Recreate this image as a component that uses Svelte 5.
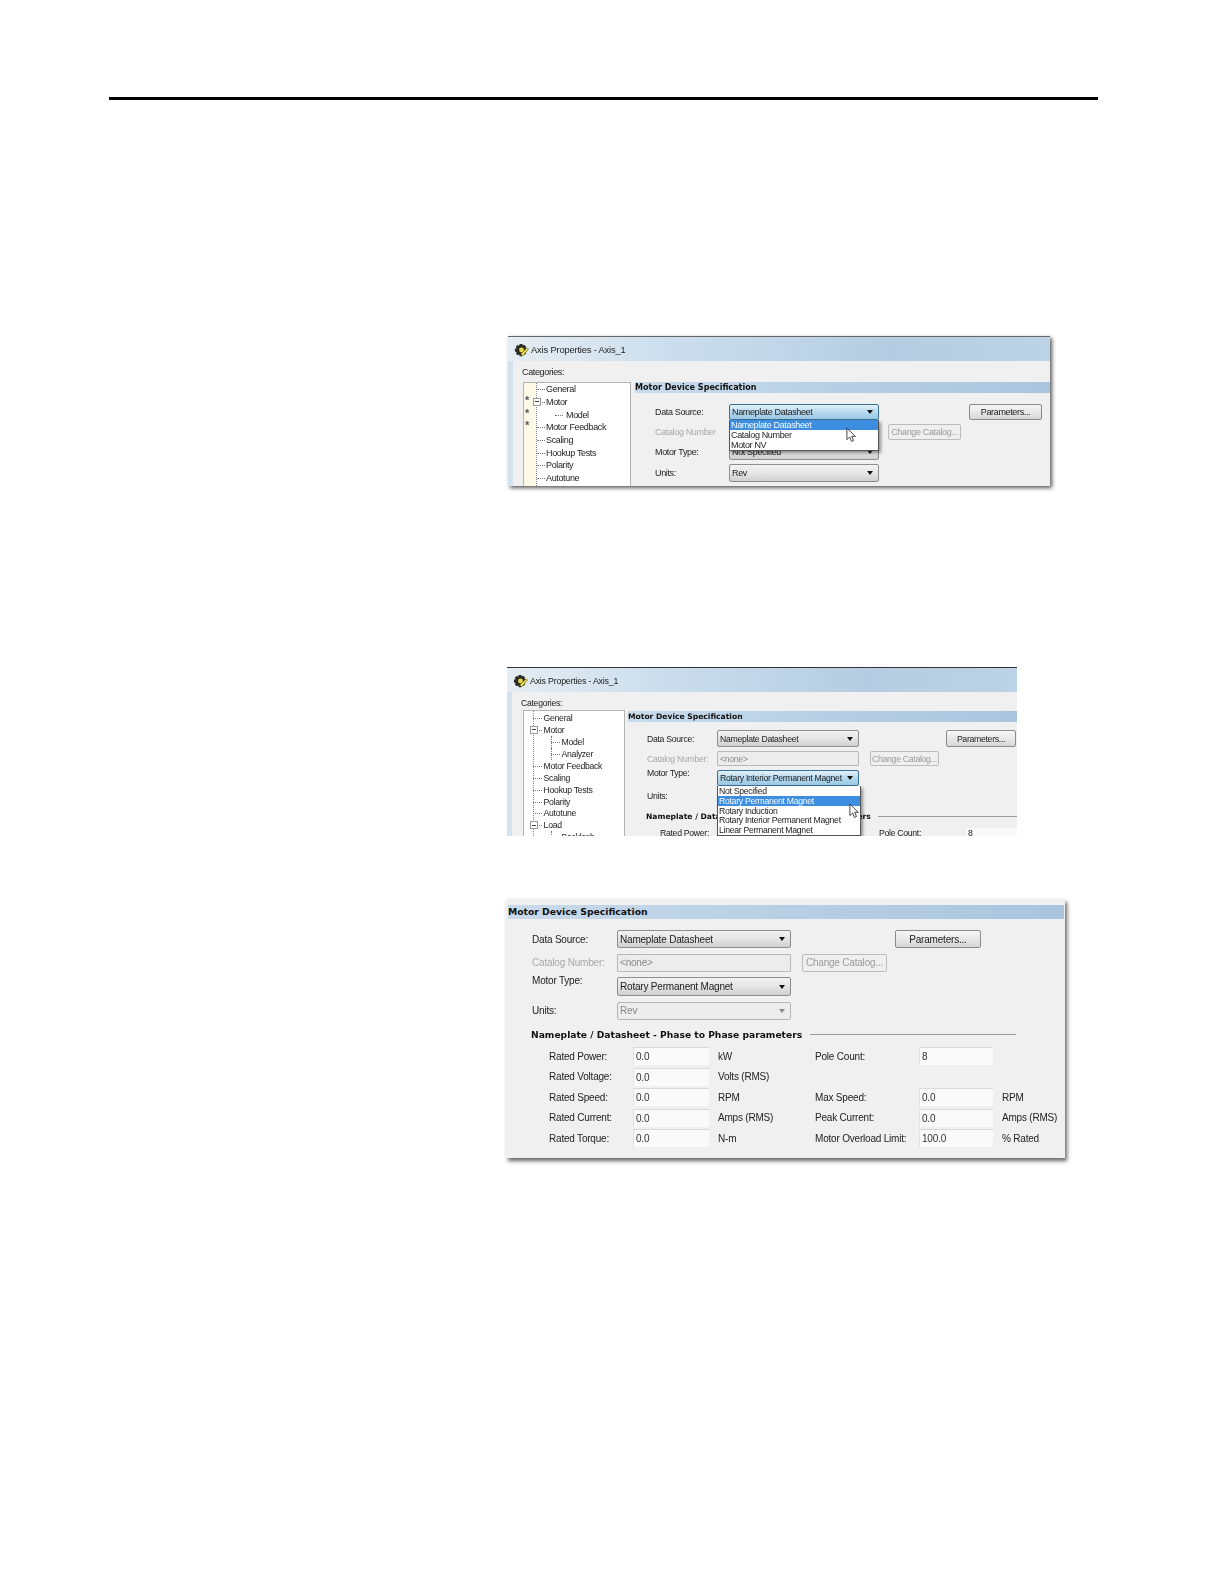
<script>
  const tree1 = [
    { t: 'General', d: 0 }, { t: 'Motor', d: 0, box: true }, { t: 'Model', d: 1 },
    { t: 'Motor Feedback', d: 0 }, { t: 'Scaling', d: 0 }, { t: 'Hookup Tests', d: 0 },
    { t: 'Polarity', d: 0 }, { t: 'Autotune', d: 0 }
  ];
  const tree2 = [
    { t: 'General', d: 0 }, { t: 'Motor', d: 0, box: true }, { t: 'Model', d: 1 }, { t: 'Analyzer', d: 1 },
    { t: 'Motor Feedback', d: 0 }, { t: 'Scaling', d: 0 }, { t: 'Hookup Tests', d: 0 },
    { t: 'Polarity', d: 0 }, { t: 'Autotune', d: 0 }, { t: 'Load', d: 0, box: true }, { t: 'Backlash', d: 1 }
  ];
  const params = [
    ['Rated Power:', '0.0', 'kW', 'Pole Count:', '8', ''],
    ['Rated Voltage:', '0.0', 'Volts (RMS)', '', '', ''],
    ['Rated Speed:', '0.0', 'RPM', 'Max Speed:', '0.0', 'RPM'],
    ['Rated Current:', '0.0', 'Amps (RMS)', 'Peak Current:', '0.0', 'Amps (RMS)'],
    ['Rated Torque:', '0.0', 'N-m', 'Motor Overload Limit:', '100.0', '% Rated']
  ];
</script>

{#snippet gear()}
  <svg class="gear" viewBox="0 0 16 16" width="15" height="15">
    <path d="M6 1h3l.4 1.7 1.6-.8 2 2-.9 1.5 1.8.5v3l-1.8.4.9 1.6-2 2-1.6-.9L9 14H6l-.4-1.8-1.6.9-2-2 .9-1.6L1 9V6l1.8-.5-.9-1.5 2-2 1.6.8z" fill="#2a2a22"/>
    <circle cx="8" cy="7.5" r="2.6" fill="#e8d94a"/>
    <path d="M7 12l7-7 1.5 1.5-6 7z" fill="#f2e24e" stroke="#55501c" stroke-width=".6"/>
  </svg>
{/snippet}

{#snippet cursor()}
  <svg class="cursor" viewBox="0 0 12 18" width="11" height="17">
    <path d="M1 1v12.5l3-2.8 2 4.8 2.2-1-2-4.6h4z" fill="#fff" stroke="#222" stroke-width=".9" stroke-linejoin="round"/>
  </svg>
{/snippet}

{#snippet tree(items)}
  {#each items as it}
    <div class="node" class:deep={it.d === 1}>
      {#if it.box}<span class="pm"></span>{/if}
      <span class="tick"></span><span>{it.t}</span>
    </div>
  {/each}
{/snippet}

{#snippet combo(text, extra = '')}
  <div class="combo {extra}"><span>{text}</span><i></i></div>
{/snippet}

<div class="page">
  <div class="rule"></div>

  <section class="shot s1">
    <header class="title">{@render gear()}<span>Axis Properties - Axis_1</span></header>
    <div class="body">
      <aside class="side">
        <div class="cat">Categories:</div>
        <div class="tree">
          <span class="star a">*</span><span class="star b">*</span><span class="star c">*</span>
          {@render tree(tree1)}
        </div>
      </aside>
      <div class="main">
        <div class="band">Motor Device Specification</div>
        <div class="form">
          <span class="lab">Data Source:</span>
          {@render combo('Nameplate Datasheet', 'focus')}
          <span></span><span></span><span></span>
          <button class="btn">Parameters...</button>

          <span class="lab off">Catalog Number</span>
          <span></span><span></span>
          <button class="btn off">Change Catalog...</button>
          <span></span><span></span>

          <span class="lab">Motor Type:</span>
          {@render combo('Not Specified')}
          <span></span><span></span><span></span><span></span>

          <span class="lab">Units:</span>
          {@render combo('Rev')}
          <span></span><span></span><span></span><span></span>
        </div>
        <div class="menu">
          <div class="item hi">Nameplate Datasheet</div>
          <div class="item">Catalog Number</div>
          <div class="item">Motor NV</div>
          {@render cursor()}
        </div>
      </div>
    </div>
  </section>

  <section class="shot s2">
    <header class="title">{@render gear()}<span>Axis Properties - Axis_1</span></header>
    <div class="body">
      <aside class="side">
        <div class="cat">Categories:</div>
        <div class="tree">{@render tree(tree2)}</div>
      </aside>
      <div class="main">
        <div class="band">Motor Device Specification</div>
        <div class="form">
          <span class="lab">Data Source:</span>
          {@render combo('Nameplate Datasheet')}
          <span></span><span></span><span></span>
          <button class="btn">Parameters...</button>

          <span class="lab off">Catalog Number:</span>
          <div class="field">&lt;none&gt;</div>
          <span></span>
          <button class="btn off">Change Catalog...</button>
          <span></span><span></span>

          <span class="lab up">Motor Type:</span>
          {@render combo('Rotary Interior Permanent Magnet', 'focus')}
          <span></span><span></span><span></span><span></span>

          <span class="lab">Units:</span>
          <span></span><span></span><span></span><span></span><span></span>
        </div>
        <div class="head"><b>Nameplate / Datasheet - Phase to Phase parameters</b><em></em></div>
        <div class="peek">
          <span>Rated Power:</span>
          <span>Pole Count:</span>
          <span class="p3">8</span>
        </div>
        <div class="menu">
          <div class="item">Not Specified</div>
          <div class="item hi">Rotary Permanent Magnet</div>
          <div class="item">Rotary Induction</div>
          <div class="item">Rotary Interior Permanent Magnet</div>
          <div class="item">Linear Permanent Magnet</div>
          {@render cursor()}
        </div>
      </div>
    </div>
  </section>

  <section class="shot s3">
    <div class="band">Motor Device Specification</div>
    <div class="form">
      <span class="lab">Data Source:</span>
      {@render combo('Nameplate Datasheet')}
      <span></span><span></span><span></span>
      <button class="btn">Parameters...</button>

      <span class="lab off">Catalog Number:</span>
      <div class="field">&lt;none&gt;</div>
      <span></span>
      <button class="btn off">Change Catalog...</button>
      <span></span><span></span>

      <span class="lab up">Motor Type:</span>
      {@render combo('Rotary Permanent Magnet')}
      <span></span><span></span><span></span><span></span>

      <span class="lab">Units:</span>
      {@render combo('Rev', 'dis')}
      <span></span><span></span><span></span><span></span>
    </div>
    <div class="head"><b>Nameplate / Datasheet - Phase to Phase parameters</b><em></em></div>
    <div class="grid">
      {#each params as row}
        <span>{row[0]}</span>
        <div class="inp">{row[1]}</div>
        <span>{row[2]}</span>
        <span>{row[3]}</span>
        {#if row[4]}<div class="inp">{row[4]}</div>{:else}<span></span>{/if}
        <span>{row[5]}</span>
      {/each}
    </div>
  </section>
</div>

<style>
  :global(body) { margin: 0; background: #fff; }
  .page {
    width: 1224px; height: 1584px; padding-top: 97px; box-sizing: border-box;
    background: #fff; overflow: hidden;
    font-family: "Liberation Sans", Arial, sans-serif; color: #1c1c1c;
  }
  .rule { width: 989px; height: 3px; margin-left: 109px; background: #000; }

  .shot { position: relative; box-sizing: border-box; background: #f0f0f0; filter: blur(.45px); }
  .s1 { width: 542px; height: 150px; margin: 236px 0 0 508px; font-size: 9px; letter-spacing: -.35px; box-shadow: 2px 2px 4px rgba(0,0,0,.65); border-top: 1px solid #666; }
  .s2 { width: 510px; height: 169px; margin: 181px 0 0 507px; font-size: 8.7px; letter-spacing: -.3px; border-top: 1px solid #333; overflow: hidden; }
  .s3 { width: 559px; height: 259px; margin: 63px 0 0 506px; font-size: 10px; letter-spacing: -.2px; padding: 6px 0 0 2px; box-shadow: 2px 3px 4px rgba(0,0,0,.6); background: #f0f0f0; }

  .title {
    height: 24px; display: flex; align-items: center; gap: 2px; padding: 2px 0 0 6px; box-sizing: border-box;
    background: linear-gradient(90deg, #e6edf3 0, #cfe0ee 25%, #b5cde2 70%, #bcd2e6 100%);
  }
  .s1 .title { font-size: 9.3px; letter-spacing: -.15px; }
  .s2 .title { font-size: 8.8px; letter-spacing: -.2px; }
  .gear { flex: none; }
  .body { display: flex; height: calc(100% - 24px); background: #f0f0f0; border-left: 5px solid #d4e2ee; box-sizing: border-box; }
  .side { flex: none; box-sizing: border-box; padding-left: 9px; }
  .s1 .side { width: 122px; }
  .s2 .side { width: 116px; }
  .cat { height: 21px; line-height: 23px; }
  .s2 .cat { height: 18px; line-height: 22px; }
  .tree {
    position: relative; background: #fff; border: 1px solid #b4b4b4; border-bottom: 0;
    box-sizing: border-box; overflow: hidden; padding-left: 17px;
    background-image: repeating-linear-gradient(180deg, #888 0 1px, transparent 1px 2px);
    background-size: 1px 100%; background-position: 12px 0; background-repeat: no-repeat;
  }
  .s1 .tree { width: 108px; height: 104px; margin-left: 1px; isolation: isolate; }
  .s2 .tree { width: 102px; height: 128px; margin-left: 2px; padding: 1px 0 0 11px; background-position: 9px 0; }
  .s1 .tree::before { content: ""; position: absolute; left: 0; top: 0; bottom: 0; width: 12px; background: #fcfae6; z-index: -1; }
  .node { position: relative; display: flex; align-items: center; height: 12.7px; white-space: nowrap; padding-left: 5px; }
  .s2 .node { height: 11.95px; padding-left: 8.6px; }
  .node.deep { padding-left: 25px; }
  .s2 .node.deep { padding-left: 26.6px; }
  .tick { position: absolute; left: -4px; width: 8px; border-top: 1px dotted #777; top: 50%; }
  .s2 .tick { left: -2px; width: 9px; }
  .node.deep .tick { left: 14px; width: 8px; }
  .s2 .node.deep .tick { left: 16px; width: 9px; }
  .s2 .node.deep::before { content: ""; position: absolute; left: 16px; top: 0; height: 100%; border-left: 1px dotted #777; }
  .pm { position: absolute; left: -8px; top: 2px; width: 6px; height: 6px; border: 1px solid #999; background: #fff; z-index: 1; box-sizing: content-box; background-image: linear-gradient(#444,#444); background-size: 4px 1px; background-position: 1px 2.5px; background-repeat: no-repeat; }
  .s2 .pm { left: -5px; }
  .star { position: absolute; left: 1px; font-size: 11px; font-weight: 700; color: #555; z-index: 1; letter-spacing: 0; }
  .star.a { top: 11px; } .star.b { top: 24px; } .star.c { top: 36px; }

  .main { position: relative; flex: 1; min-width: 0; }
  .s1 .main { margin-top: 21px; }
  .s2 .main { margin-top: 19px; }
  .band {
    font-family: "DejaVu Sans", sans-serif; font-weight: 700; color: #111; letter-spacing: 0;
    background: linear-gradient(90deg, #c9dbeb, #b7cfe4 50%, #a9c5de);
    white-space: nowrap; display: flex; align-items: center; overflow: hidden;
  }
  .s1 .band { height: 11px; font-size: 8.05px; }
  .s2 .band { height: 11px; font-size: 7.6px; }
  .s3 .band { height: 13.5px; font-size: 9.25px; margin-right: 1px; }

  .form { display: grid; align-items: center; white-space: nowrap; }
  .s1 .form {
    padding: 11px 0 0 20px;
    grid-template-columns: 74px 150px 9px 73px 8px 73px;
    grid-template-rows: 16px 16px 16px 18px; row-gap: 4px;
  }
  .s2 .form {
    padding: 8px 0 0 19px;
    grid-template-columns: 70px 142px 11px 69px 7px 70px;
    grid-template-rows: 17px 15px 16px 12px; row-gap: 4px;
  }
  .s3 .form {
    padding: 11.5px 0 0 24px;
    grid-template-columns: 85px 174px 11px 85px 8px 86px;
    grid-template-rows: 18px 18px 19px 18px; row-gap: 5.5px;
  }
  .lab { color: #222; }
  .up { align-self: start; margin-top: -2px; }
  .off { color: #a9a9a9; }

  .combo {
    height: 100%; box-sizing: border-box; display: flex; align-items: center; justify-content: space-between;
    padding: 0 5px 0 2px; border: 1px solid #8e8e8e; border-radius: 2px;
    background: linear-gradient(#f2f2f2, #e6e6e6 50%, #cfcfcf);
  }
  .combo i { width: 0; height: 0; border: 3px solid transparent; border-top: 4px solid #111; border-bottom: 0; }
  .combo.focus { border-color: #3a6f94; background: linear-gradient(#e4f2fa, #b6d9ee 50%, #9bc8e4); }
  .combo.dis { color: #888; background: #ededed; border-color: #b5b5b5; }
  .combo.dis i { border-top-color: #888; }
  .field {
    height: 100%; box-sizing: border-box; display: flex; align-items: center; padding-left: 2px; color: #8b8b8b;
    border: 1px solid #b8b8b8; background: #ececec; border-radius: 1px;
  }
  .btn {
    height: 100%; width: 100%; padding: 0; font: inherit; letter-spacing: inherit; color: #222; border: 1px solid #8a8a8a; border-radius: 2px;
    background: linear-gradient(#f6f6f6, #e8e8e8 50%, #d6d6d6); white-space: nowrap; overflow: hidden;
  }
  .btn.off { color: #9b9b9b; border-color: #bcbcbc; background: #efefef; }

  .menu { position: absolute; box-sizing: border-box; background: #fff; border: 1px solid #555; border-top: 0; box-shadow: 2px 2px 3px rgba(0,0,0,.4); z-index: 2; white-space: nowrap; }
  .s1 .menu { left: 94px; top: 38px; width: 150px; height: 31px; }
  .s2 .menu { left: 89px; top: 75px; width: 144px; height: 50px; }
  .item { height: 10px; line-height: 10px; padding-left: 1px; }
  .s2 .item { height: 9.8px; line-height: 10px; }
  .item.hi { background: #3d8ee0; color: #f4f9ff; }
  .cursor { position: absolute; }
  .s1 .cursor { left: 116px; top: 7px; }
  .s2 .cursor { left: 131px; top: 17px; }

  .head { display: flex; align-items: center; white-space: nowrap; font-family: "DejaVu Sans", sans-serif; color: #111; letter-spacing: 0; }
  .head b { font-weight: 700; }
  .head em { display: block; height: 1px; background: #9a9a9a; }
  .s2 .head { font-size: 7.6px; height: 12px; margin: 8px 0 0 18px; }
  .s2 .head em { flex: 1; margin-left: 7px; }
  .s3 .head { font-size: 9.17px; height: 14px; margin: 7.5px 0 0 23px; }
  .s3 .head em { width: 206px; margin-left: 8px; }

  .peek { display: grid; grid-template-columns: 219px 87px auto; height: 14px; margin: 6px 0 0 32px; }
  .p3 { background: #fafafa; padding-left: 2px; }

  .grid {
    display: grid; align-items: center; white-space: nowrap; padding: 6px 0 0 41px; color: #222;
    grid-template-columns: 84px 76px 106px 104px 74px auto;
    grid-auto-rows: 18px; row-gap: 2.55px;
  }
  .grid > span:nth-child(6n+3), .grid > span:nth-child(6n) { padding-left: 9px; }
  .inp { height: 100%; box-sizing: border-box; background: #fafafa; border-top: 1px solid #d9d9d9; border-left: 1px solid #e2e2e2; display: flex; align-items: center; padding-left: 2px; color: #333; }
</style>
